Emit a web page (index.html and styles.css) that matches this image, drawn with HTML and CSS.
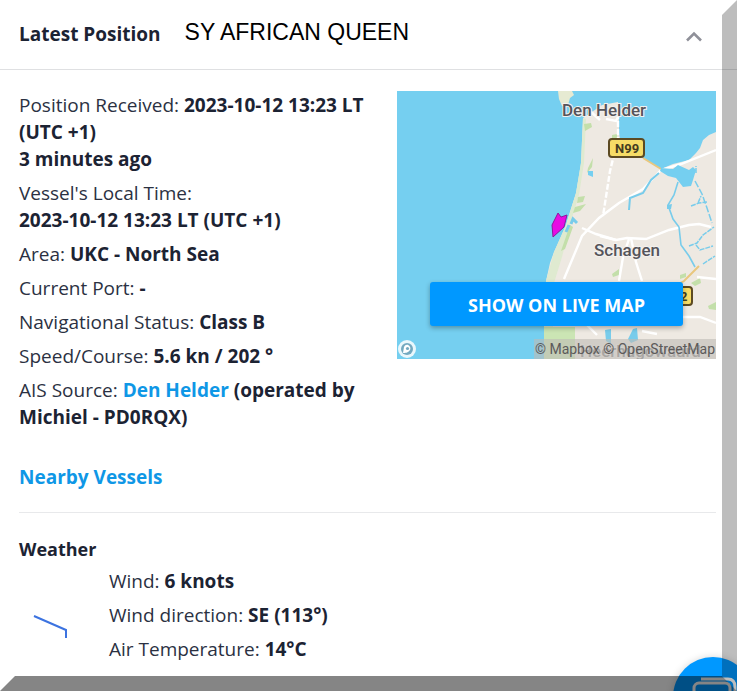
FILE: index.html
```
<!DOCTYPE html>
<html lang="en">

<head>
    <meta charset="UTF-8">
    <meta name="viewport" content="width=device-width, initial-scale=1.0">
    <title>Latest Position</title>
    <link rel="stylesheet" href="styles.css">
</head>

<body>
    <div class="page">
        <header class="head">
            <h2 class="head-title">Latest Position</h2>
            <h1 class="ship-name">SY AFRICAN QUEEN</h1>
            <button class="toggle" type="button" aria-label="Collapse">
                <svg width="18" height="12" viewBox="0 0 18 12">
                    <path d="M2 9.500L9 2.500L16 9.500" fill="none" stroke="#8f9099" stroke-width="2.600" />
                </svg>
            </button>
        </header>

        <main class="content">
            <section class="position">
                <div class="info">
                    <p>Position Received: <b>2023-10-12 13:23 LT (UTC +1)<br>3 minutes ago</b></p>
                    <p>Vessel's Local Time:<br><b>2023-10-12 13:23 LT (UTC +1)</b></p>
                    <p>Area: <b>UKC - North Sea</b></p>
                    <p>Current Port: <b>-</b></p>
                    <p>Navigational Status: <b>Class B</b></p>
                    <p>Speed/Course: <b>5.6 kn / 202 °</b></p>
                    <p>AIS Source: <b><a href="#">Den Helder</a> (operated by Michiel - PD0RQX)</b></p>
                </div>

                <div class="map">
                    <svg class="map-img" viewBox="0 0 319 268">
                        <rect width="319" height="268" fill="#75cff0" />
                        <!-- land -->
                        <path d="M186 27L192 23L205 14L221 11L222 26L222 42L224 54L246 67L264 78L276 73L284 71L292 69L299 62L303 57L306 49L312 44L319 41V268H147V236L149 190L153 172L157 161L162 150L169 134L171 127L179 102L184 72Z" fill="#eee9e2" />
                        <path d="M161 0L162 8L165 15L171 14L173 7L177 4L175 0Z" fill="#e6ead2" />
                        <!-- dunes -->
                        <path d="M186 27L189 28L187 72L182 104L174 130L165 166L157 192L156 236V268H147V236L149 190L157 161L169 134L179 102L184 72Z" fill="#dfead0" />
                        <path d="M187 33L194 32L195 36L188 40ZM215 44L220 43L220 48L215 49ZM191 77L196 67L195 76L190 82ZM181 106L188 105L186 111L180 112ZM178 116L189 113L183 120L176 122ZM173 134L176 136L168 158L164 160ZM215 183L222 178L222 184L216 186ZM283 184L289 182L289 186L283 188ZM294 192L303 187L304 192L298 195ZM311 215L319 211V219L312 218Z" fill="#c3dfaa" />
                        <path d="M147 236H178V268H147Z" fill="#cbe5b4" />
                        <!-- roads -->
                        <g fill="none" stroke="#fff" stroke-width="2.400">
                            <path d="M319 59L284 73L264 79L246 98L222 112L202 127L185 145L167 188" />
                            <path d="M221 14L221 48L213 80L206 125" stroke-dasharray="6 2" />
                            <path d="M185 137L199 143L219 149L230 147L249 148L272 139L292 134L302 133L314 136" />
                            <path d="M232 148L226 166L222 190M234 147L239 171L245 190M203 145L219 149M300 186L319 188M285 226L303 226L319 232M178 222L200 244M245 240L260 243" />
                            <path d="M193 20L203 29M213 23L227 22M225 18L219 30L209 28" />
                        </g>
                        <path d="M246 67L264 78M302 175L287 190L280 194" fill="none" stroke="#e9c77e" stroke-width="2" />
                        <!-- canals and lakes -->
                        <path d="M264 77L276 78L281 74L292 79L296 76L299 79L296 89L294 95L286 96L279 87L271 85L263 80ZM191 80H196V86L191 84Z" fill="#75cff0" />
                        <g fill="none" stroke="#78cceb" stroke-width="2">
                            <path d="M262 82L254 89L246 102L233 107L232 119" />
                            <path d="M281 91L277 104L271 114L276 128L282 136L284 154L292 165L298 176" stroke-width="1.600" />
                            <path d="M298 90L305 103L310 117L315 132" stroke-width="1.500" stroke-dasharray="7 2" />
                            <path d="M294 115L302 112L310 111M299 82V75M292 155L300 152L306 144L317 136M299 154L303 159L316 155M306 173L318 165M301 112L304 105" stroke-width="1.500" stroke-dasharray="5 1" />
                            <path d="M169 141L172 134M174 133L176 128L180 132" stroke-width="3" />
                        </g>
                        <path d="M270 114L275 113L274 118H270ZM236 238L240 237L241 249L234 252L231 248ZM208 239L214 238L214 253L209 250Z" fill="#78cceb" />
                        <!-- labels -->
                        <g class="map-label">
                            <text x="165" y="25">Den Helder</text>
                            <text x="197" y="165">Schagen</text>
                            <text class="faded" x="183" y="266">Heerhugowaard</text>
                        </g>
                        <g class="road-sign">
                            <rect x="212" y="48" width="35" height="18" rx="3" />
                            <text x="218" y="62">N99</text>
                            <rect x="270" y="196" width="25" height="18" rx="3" />
                            <text x="283" y="210">2</text>
                        </g>
                        <!-- vessel -->
                        <path d="M161 122L164 126L170 124L167 136L156 146L155 134Z" fill="#e80be4" stroke="#8d189c" />
                        <!-- map logo -->
                        <circle cx="10" cy="258" r="9" fill="#e9f7fc" />
                        <circle cx="10" cy="258" r="6" fill="#73a9c0" />
                        <path d="M6 262L7 256C9 251 15 255 13 259C11 262 8 262 6 262Z" fill="#fff" />
                        <circle cx="10.500" cy="257.500" r="1.600" fill="#73a9c0" />
                    </svg>
                    <button class="live-btn" type="button">SHOW ON LIVE MAP</button>
                    <small class="credit">© Mapbox © OpenStreetMap</small>
                </div>
            </section>

            <a class="nearby" href="#">Nearby Vessels</a>

            <section class="weather">
                <h3>Weather</h3>
                <div class="weather-row">
                    <svg class="barb" width="40" height="28" viewBox="0 0 40 28">
                        <path d="M3 3L35 17V25" fill="none" stroke="#3c73e0" stroke-width="2" />
                    </svg>
                    <div class="info">
                        <p>Wind: <b>6 knots</b></p>
                        <p>Wind direction: <b>SE (113°)</b></p>
                        <p>Air Temperature: <b>14°C</b></p>
                    </div>
                </div>
            </section>
        </main>

        <button class="chat" type="button" aria-label="Chat">
            <svg width="80" height="80" viewBox="0 0 80 80">
                <rect x="21" y="26" width="36" height="30" rx="5" fill="none" stroke="#fff" stroke-width="3" />
                <path d="M28 22H55Q62 22 62 30V50" fill="none" stroke="#fff" stroke-width="3" />
            </svg>
        </button>
        <div class="edge-right"></div>
        <div class="edge-bottom"></div>
    </div>
</body>

</html>
```
FILE: styles.css
```
* {
    margin: 0;
    padding: 0;
    box-sizing: border-box;
}

body {
    font-family: "Open Sans", "Noto Sans", sans-serif;
    font-size: 19px;
    line-height: 27px;
    color: #2b3142;
    background-color: #fff;
}

.page {
    position: relative;
    min-height: 100vh;
    overflow: hidden;
}

.head {
    display: flex;
    align-items: center;
    height: 70px;
    padding: 0 32px 0 19px;
    border-bottom: 1px solid #dfe0e2;
}

.head-title {
    font-size: 19px;
    font-weight: 700;
    color: #1c2333;
}

.ship-name {
    margin-left: 24px;
    padding-bottom: 5px;
    font-family: "Liberation Sans", Arial, sans-serif;
    font-size: 23px;
    font-weight: 400;
    color: #000;
}

.toggle {
    margin-left: auto;
    padding: 4px 2px 0;
    border: none;
    background-color: transparent;
    line-height: 0;
}

.content {
    padding: 21px 21px 15px 19px;
}

.position {
    display: grid;
    grid-template-columns: 1fr 319px;
    gap: 30px;
    align-items: start;
}

.info {
    padding-top: 1px;
}

.info p {
    margin-bottom: 7px;
}

b {
    font-weight: 700;
    color: #1c2333;
}

a {
    color: #0f97e6;
    text-decoration: none;
}

.map {
    position: relative;
}

.map-img {
    display: block;
    width: 100%;
}

.map-label {
    font-family: "Roboto", sans-serif;
    font-size: 17px;
    font-weight: 500;
    fill: #55545a;
    stroke: #f3f1ee;
    stroke-width: 2px;
    paint-order: stroke;
}

.map-label .faded {
    fill: #8a8888;
}

.road-sign rect {
    fill: #f6dc66;
    stroke: #5c4a22;
    stroke-width: 2px;
}

.road-sign text {
    font-family: "Roboto", sans-serif;
    font-size: 13px;
    font-weight: 700;
    fill: #443c20;
}

.live-btn {
    position: absolute;
    left: 33px;
    right: 33px;
    bottom: 33px;
    height: 44px;
    padding-top: 2px;
    border: none;
    border-radius: 3px;
    background-color: #0098ff;
    box-shadow: 0 2px 5px rgba(0, 0, 0, 0.3);
    font-family: inherit;
    font-size: 18px;
    font-weight: 700;
    color: #fff;
}

.credit {
    position: absolute;
    right: 0;
    bottom: 0;
    padding: 0 1px;
    background-color: rgba(190, 186, 182, 0.6);
    font-family: "Roboto", sans-serif;
    font-size: 14px;
    line-height: 20px;
    color: #5c5a5a;
}

.nearby {
    display: block;
    margin-top: 26px;
    padding-bottom: 21px;
    border-bottom: 1px solid #e8e9eb;
    font-weight: 700;
}

.weather {
    padding-top: 23px;
}

.weather h3 {
    font-size: 18px;
    font-weight: 700;
    color: #1c2333;
}

.weather-row {
    display: flex;
    align-items: center;
    gap: 38px;
    margin-top: 4px;
    padding-left: 12px;
}

.barb {
    margin-top: 16px;
}

.chat {
    position: absolute;
    right: -16px;
    bottom: -46px;
    width: 80px;
    height: 80px;
    border: none;
    border-radius: 50%;
    background-color: #0098ff;
    box-shadow: 0 1px 8px rgba(0, 0, 0, 0.2);
}

/* bevelled frame along the right and bottom sides */
.edge-right,
.edge-bottom {
    position: absolute;
    right: 0;
    bottom: 0;
    pointer-events: none;
}

.edge-right {
    top: 0;
    width: 15px;
    background-color: rgba(0, 0, 0, 0.26);
    clip-path: polygon(0 15px, 100% 0, 100% 100%, 0 calc(100% - 15px));
}

.edge-bottom {
    left: 0;
    height: 15px;
    background-color: rgba(0, 0, 0, 0.48);
    clip-path: polygon(15px 0, calc(100% - 15px) 0, 100% 100%, 0 100%);
}
```
